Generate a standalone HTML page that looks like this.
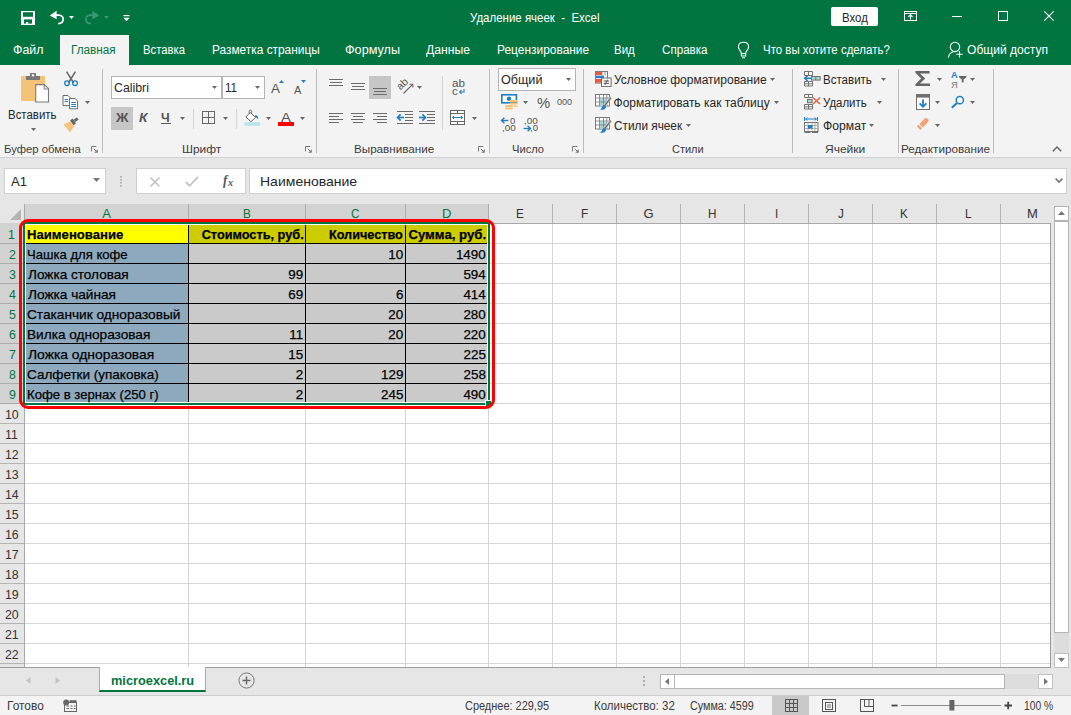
<!DOCTYPE html>
<html lang="ru"><head><meta charset="utf-8"><title>Удаление ячеек - Excel</title>
<style>
html,body{margin:0;padding:0;}
body{width:1071px;height:715px;position:relative;overflow:hidden;background:#fff;font-family:"Liberation Sans",sans-serif;}
.a{position:absolute;box-sizing:border-box;}
.t{position:absolute;white-space:pre;line-height:16px;}
svg{position:absolute;overflow:visible;}
</style></head><body>
<div class="a" style="left:0px;top:0px;width:1071px;height:65px;background:#027440;"></div>
<div class="a" style="left:831px;top:7px;width:47px;height:19px;background:#fff;border-radius:2px;"></div>
<div class="a" style="left:60px;top:35px;width:69px;height:31px;background:#f3f3f3;"></div>
<div class="a" style="left:0px;top:65px;width:1071px;height:92px;background:#f3f3f3;"></div>
<div class="a" style="left:0px;top:157px;width:1071px;height:1px;background:#d0d0d0;"></div>
<div class="a" style="left:0px;top:158px;width:1071px;height:46px;background:#e6e6e6;"></div>
<div class="a" style="left:4px;top:168px;width:102px;height:26px;background:#fff;border:1px solid #cfcfcf;"></div>
<div class="a" style="left:136px;top:168px;width:110px;height:26px;background:#fff;border:1px solid #cfcfcf;"></div>
<div class="a" style="left:249px;top:168px;width:818px;height:26px;background:#fff;border:1px solid #cfcfcf;"></div>
<div class="a" style="left:102px;top:69px;width:1px;height:84px;background:#bcbcbc;"></div>
<div class="a" style="left:316px;top:69px;width:1px;height:84px;background:#bcbcbc;"></div>
<div class="a" style="left:489px;top:69px;width:1px;height:84px;background:#bcbcbc;"></div>
<div class="a" style="left:583px;top:69px;width:1px;height:84px;background:#bcbcbc;"></div>
<div class="a" style="left:792px;top:69px;width:1px;height:84px;background:#bcbcbc;"></div>
<div class="a" style="left:898px;top:69px;width:1px;height:84px;background:#bcbcbc;"></div>
<div class="a" style="left:993px;top:69px;width:1px;height:84px;background:#bcbcbc;"></div>
<div class="a" style="left:111px;top:76px;width:111px;height:23px;background:#fff;border:1px solid #b4b4b4;"></div>
<div class="a" style="left:222px;top:76px;width:43px;height:23px;background:#fff;border:1px solid #b4b4b4;"></div>
<div class="a" style="left:498px;top:68px;width:78px;height:23px;background:#fff;border:1px solid #b4b4b4;"></div>
<div class="a" style="left:111px;top:107px;width:22px;height:23px;background:#c6c6c6;"></div>
<div class="a" style="left:369px;top:76px;width:22px;height:23px;background:#c6c6c6;"></div>
<div class="a" style="left:193px;top:109px;width:1px;height:20px;background:#d4d4d4;"></div>
<div class="a" style="left:236px;top:109px;width:1px;height:20px;background:#d4d4d4;"></div>
<div class="a" style="left:442px;top:76px;width:1px;height:54px;background:#d4d4d4;"></div>
<div class="a" style="left:0px;top:204px;width:1051px;height:463px;background:#fff;"></div>
<div class="a" style="left:0px;top:204px;width:1051px;height:19px;background:#e6e6e6;"></div>
<div class="a" style="left:25px;top:204px;width:464px;height:19px;background:#d2d2d2;"></div>
<div class="a" style="left:0px;top:223px;width:24px;height:444px;background:#e6e6e6;"></div>
<div class="a" style="left:0px;top:223px;width:24px;height:181px;background:#d2d2d2;"></div>
<div class="a" style="left:24px;top:223px;width:1027px;height:1px;background:#a8a8a8;"></div>
<div class="a" style="left:24px;top:204px;width:1px;height:463px;background:#a8a8a8;"></div>
<div class="a" style="left:25px;top:243px;width:1026px;height:1px;background:#d4d4d4;"></div>
<div class="a" style="left:0px;top:243px;width:24px;height:1px;background:#ababab;"></div>
<div class="a" style="left:25px;top:263px;width:1026px;height:1px;background:#d4d4d4;"></div>
<div class="a" style="left:0px;top:263px;width:24px;height:1px;background:#ababab;"></div>
<div class="a" style="left:25px;top:283px;width:1026px;height:1px;background:#d4d4d4;"></div>
<div class="a" style="left:0px;top:283px;width:24px;height:1px;background:#ababab;"></div>
<div class="a" style="left:25px;top:303px;width:1026px;height:1px;background:#d4d4d4;"></div>
<div class="a" style="left:0px;top:303px;width:24px;height:1px;background:#ababab;"></div>
<div class="a" style="left:25px;top:323px;width:1026px;height:1px;background:#d4d4d4;"></div>
<div class="a" style="left:0px;top:323px;width:24px;height:1px;background:#ababab;"></div>
<div class="a" style="left:25px;top:343px;width:1026px;height:1px;background:#d4d4d4;"></div>
<div class="a" style="left:0px;top:343px;width:24px;height:1px;background:#ababab;"></div>
<div class="a" style="left:25px;top:363px;width:1026px;height:1px;background:#d4d4d4;"></div>
<div class="a" style="left:0px;top:363px;width:24px;height:1px;background:#ababab;"></div>
<div class="a" style="left:25px;top:383px;width:1026px;height:1px;background:#d4d4d4;"></div>
<div class="a" style="left:0px;top:383px;width:24px;height:1px;background:#ababab;"></div>
<div class="a" style="left:25px;top:403px;width:1026px;height:1px;background:#d4d4d4;"></div>
<div class="a" style="left:0px;top:403px;width:24px;height:1px;background:#ababab;"></div>
<div class="a" style="left:25px;top:423px;width:1026px;height:1px;background:#d4d4d4;"></div>
<div class="a" style="left:0px;top:423px;width:24px;height:1px;background:#b4b4b4;"></div>
<div class="a" style="left:25px;top:443px;width:1026px;height:1px;background:#d4d4d4;"></div>
<div class="a" style="left:0px;top:443px;width:24px;height:1px;background:#b4b4b4;"></div>
<div class="a" style="left:25px;top:463px;width:1026px;height:1px;background:#d4d4d4;"></div>
<div class="a" style="left:0px;top:463px;width:24px;height:1px;background:#b4b4b4;"></div>
<div class="a" style="left:25px;top:483px;width:1026px;height:1px;background:#d4d4d4;"></div>
<div class="a" style="left:0px;top:483px;width:24px;height:1px;background:#b4b4b4;"></div>
<div class="a" style="left:25px;top:503px;width:1026px;height:1px;background:#d4d4d4;"></div>
<div class="a" style="left:0px;top:503px;width:24px;height:1px;background:#b4b4b4;"></div>
<div class="a" style="left:25px;top:523px;width:1026px;height:1px;background:#d4d4d4;"></div>
<div class="a" style="left:0px;top:523px;width:24px;height:1px;background:#b4b4b4;"></div>
<div class="a" style="left:25px;top:543px;width:1026px;height:1px;background:#d4d4d4;"></div>
<div class="a" style="left:0px;top:543px;width:24px;height:1px;background:#b4b4b4;"></div>
<div class="a" style="left:25px;top:563px;width:1026px;height:1px;background:#d4d4d4;"></div>
<div class="a" style="left:0px;top:563px;width:24px;height:1px;background:#b4b4b4;"></div>
<div class="a" style="left:25px;top:583px;width:1026px;height:1px;background:#d4d4d4;"></div>
<div class="a" style="left:0px;top:583px;width:24px;height:1px;background:#b4b4b4;"></div>
<div class="a" style="left:25px;top:603px;width:1026px;height:1px;background:#d4d4d4;"></div>
<div class="a" style="left:0px;top:603px;width:24px;height:1px;background:#b4b4b4;"></div>
<div class="a" style="left:25px;top:623px;width:1026px;height:1px;background:#d4d4d4;"></div>
<div class="a" style="left:0px;top:623px;width:24px;height:1px;background:#b4b4b4;"></div>
<div class="a" style="left:25px;top:643px;width:1026px;height:1px;background:#d4d4d4;"></div>
<div class="a" style="left:0px;top:643px;width:24px;height:1px;background:#b4b4b4;"></div>
<div class="a" style="left:25px;top:663px;width:1026px;height:1px;background:#d4d4d4;"></div>
<div class="a" style="left:0px;top:663px;width:24px;height:1px;background:#b4b4b4;"></div>
<div class="a" style="left:188px;top:224px;width:1px;height:443px;background:#d4d4d4;"></div>
<div class="a" style="left:188px;top:204px;width:1px;height:19px;background:#ababab;"></div>
<div class="a" style="left:305px;top:224px;width:1px;height:443px;background:#d4d4d4;"></div>
<div class="a" style="left:305px;top:204px;width:1px;height:19px;background:#ababab;"></div>
<div class="a" style="left:405px;top:224px;width:1px;height:443px;background:#d4d4d4;"></div>
<div class="a" style="left:405px;top:204px;width:1px;height:19px;background:#ababab;"></div>
<div class="a" style="left:488px;top:224px;width:1px;height:443px;background:#d4d4d4;"></div>
<div class="a" style="left:488px;top:204px;width:1px;height:19px;background:#ababab;"></div>
<div class="a" style="left:552px;top:224px;width:1px;height:443px;background:#d4d4d4;"></div>
<div class="a" style="left:552px;top:204px;width:1px;height:19px;background:#b4b4b4;"></div>
<div class="a" style="left:616px;top:224px;width:1px;height:443px;background:#d4d4d4;"></div>
<div class="a" style="left:616px;top:204px;width:1px;height:19px;background:#b4b4b4;"></div>
<div class="a" style="left:680px;top:224px;width:1px;height:443px;background:#d4d4d4;"></div>
<div class="a" style="left:680px;top:204px;width:1px;height:19px;background:#b4b4b4;"></div>
<div class="a" style="left:744px;top:224px;width:1px;height:443px;background:#d4d4d4;"></div>
<div class="a" style="left:744px;top:204px;width:1px;height:19px;background:#b4b4b4;"></div>
<div class="a" style="left:808px;top:224px;width:1px;height:443px;background:#d4d4d4;"></div>
<div class="a" style="left:808px;top:204px;width:1px;height:19px;background:#b4b4b4;"></div>
<div class="a" style="left:872px;top:224px;width:1px;height:443px;background:#d4d4d4;"></div>
<div class="a" style="left:872px;top:204px;width:1px;height:19px;background:#b4b4b4;"></div>
<div class="a" style="left:936px;top:224px;width:1px;height:443px;background:#d4d4d4;"></div>
<div class="a" style="left:936px;top:204px;width:1px;height:19px;background:#b4b4b4;"></div>
<div class="a" style="left:1000px;top:224px;width:1px;height:443px;background:#d4d4d4;"></div>
<div class="a" style="left:1000px;top:204px;width:1px;height:19px;background:#b4b4b4;"></div>
<svg style="left:9px;top:208px" width="13" height="13"><path d="M12 1V12H1Z" fill="#b4b4b4"/></svg>
<div class="a" style="left:25px;top:224px;width:463px;height:179px;background:#fff;"></div>
<div class="a" style="left:26px;top:225px;width:162px;height:18px;background:#ffff00;"></div>
<div class="a" style="left:189px;top:225px;width:298px;height:18px;background:#cccc00;"></div>
<div class="a" style="left:26px;top:244px;width:162px;height:158px;background:#8ea9be;"></div>
<div class="a" style="left:189px;top:244px;width:298px;height:158px;background:#cacaca;"></div>
<div class="a" style="left:26px;top:243px;width:461px;height:1px;background:#000;"></div>
<div class="a" style="left:26px;top:263px;width:461px;height:1px;background:#000;"></div>
<div class="a" style="left:26px;top:283px;width:461px;height:1px;background:#000;"></div>
<div class="a" style="left:26px;top:303px;width:461px;height:1px;background:#000;"></div>
<div class="a" style="left:26px;top:323px;width:461px;height:1px;background:#000;"></div>
<div class="a" style="left:26px;top:343px;width:461px;height:1px;background:#000;"></div>
<div class="a" style="left:26px;top:363px;width:461px;height:1px;background:#000;"></div>
<div class="a" style="left:26px;top:383px;width:461px;height:1px;background:#000;"></div>
<div class="a" style="left:188px;top:225px;width:1px;height:177px;background:#000;"></div>
<div class="a" style="left:305px;top:225px;width:1px;height:177px;background:#000;"></div>
<div class="a" style="left:405px;top:225px;width:1px;height:177px;background:#000;"></div>
<div class="a" style="left:23px;top:222px;width:467px;height:183px;border:2px solid #027440;"></div>
<div class="a" style="left:485px;top:400px;width:7px;height:7px;background:#027440;border:1px solid #fff;"></div>
<div class="a" style="left:19px;top:219px;width:476px;height:190px;border:3px solid #ff0000;border-radius:9px;"></div>
<div class="a" style="left:1050px;top:223px;width:1px;height:445px;background:#9c9c9c;"></div>
<div class="a" style="left:0px;top:667px;width:1051px;height:1px;background:#9c9c9c;"></div>
<div class="a" style="left:1051px;top:204px;width:20px;height:464px;background:#e6e6e6;"></div>
<div class="a" style="left:1054px;top:206px;width:15px;height:15px;background:#fff;border:1px solid #b4b4b4;"></div>
<div class="a" style="left:1054px;top:221px;width:15px;height:412px;background:#fff;border:1px solid #b4b4b4;"></div>
<div class="a" style="left:1054px;top:633px;width:15px;height:20px;background:#dddddd;"></div>
<div class="a" style="left:1054px;top:653px;width:15px;height:15px;background:#fff;border:1px solid #c0c0c0;"></div>
<svg style="left:1058px;top:211px" width="7" height="4"><path d="M0 4L3.5 0L7 4Z" fill="#777"/></svg>
<svg style="left:1058px;top:658px" width="7" height="4"><path d="M0 0L3.5 4L7 0Z" fill="#777"/></svg>
<div class="a" style="left:0px;top:668px;width:1071px;height:27px;background:#e6e6e6;"></div>
<div class="a" style="left:99px;top:667px;width:107px;height:25px;background:#fff;border-left:1px solid #ababab;border-right:1px solid #ababab;border-bottom:2px solid #027440;"></div>
<div class="a" style="left:0px;top:695px;width:1071px;height:1px;background:#cdcdcd;"></div>
<div class="a" style="left:660px;top:674px;width:15px;height:15px;background:#fff;border:1px solid #b4b4b4;"></div>
<div class="a" style="left:674px;top:674px;width:331px;height:15px;background:#fff;border:1px solid #b4b4b4;"></div>
<div class="a" style="left:1005px;top:674px;width:33px;height:15px;background:#dddddd;"></div>
<div class="a" style="left:1038px;top:674px;width:15px;height:15px;background:#fff;border:1px solid #c0c0c0;"></div>
<svg style="left:665px;top:678px" width="4" height="7"><path d="M4 0L0 3.5L4 7Z" fill="#777"/></svg>
<svg style="left:1044px;top:678px" width="4" height="7"><path d="M0 0L4 3.5L0 7Z" fill="#777"/></svg>
<div class="a" style="left:0px;top:696px;width:1071px;height:19px;background:#f3f3f3;"></div>
<div class="a" style="left:772px;top:696px;width:37px;height:19px;background:#c8c8c8;"></div>
<span class="t" style="top:9.67px;font-size:12.2px;color:#fff;left:469.92px;transform-origin:0 50%;transform:scaleX(0.9418);">Удаление ячеек  -  Excel</span>
<span class="t" style="top:9.74px;font-size:12px;color:#262626;left:841.69px;transform-origin:0 50%;transform:scaleX(0.9540);">Вход</span>
<span class="t" style="top:41.84px;font-size:12.3px;color:#fff;left:13.29px;transform-origin:0 50%;transform:scaleX(1.0100);">Файл</span>
<span class="t" style="top:41.84px;font-size:12.3px;color:#027440;left:71.44px;transform-origin:0 50%;transform:scaleX(0.9554);">Главная</span>
<span class="t" style="top:41.84px;font-size:12.3px;color:#fff;left:142.78px;transform-origin:0 50%;transform:scaleX(0.9167);">Вставка</span>
<span class="t" style="top:41.84px;font-size:12.3px;color:#fff;left:211.63px;transform-origin:0 50%;transform:scaleX(0.9659);">Разметка страницы</span>
<span class="t" style="top:41.84px;font-size:12.3px;color:#fff;left:345.48px;transform-origin:0 50%;transform:scaleX(1.0272);">Формулы</span>
<span class="t" style="top:41.84px;font-size:12.3px;color:#fff;left:426.45px;transform-origin:0 50%;transform:scaleX(0.9921);">Данные</span>
<span class="t" style="top:41.84px;font-size:12.3px;color:#fff;left:496.53px;transform-origin:0 50%;transform:scaleX(0.9707);">Рецензирование</span>
<span class="t" style="top:41.84px;font-size:12.3px;color:#fff;left:614.47px;transform-origin:0 50%;transform:scaleX(0.9348);">Вид</span>
<span class="t" style="top:41.84px;font-size:12.3px;color:#fff;left:662.13px;transform-origin:0 50%;transform:scaleX(0.9442);">Справка</span>
<span class="t" style="top:41.84px;font-size:12.3px;color:#fff;left:762.61px;transform-origin:0 50%;transform:scaleX(0.9325);">Что вы хотите сделать?</span>
<span class="t" style="top:41.84px;font-size:12.3px;color:#fff;left:967.46px;transform-origin:0 50%;transform:scaleX(0.9806);">Общий доступ</span>
<span class="t" style="top:141.35px;font-size:11.4px;color:#3b3b3b;left:3.61px;transform-origin:0 50%;transform:scaleX(0.9925);">Буфер обмена</span>
<span class="t" style="top:141.35px;font-size:11.4px;color:#3b3b3b;left:181.86px;transform-origin:0 50%;transform:scaleX(1.0484);">Шрифт</span>
<span class="t" style="top:141.35px;font-size:11.4px;color:#3b3b3b;left:354.48px;transform-origin:0 50%;transform:scaleX(1.0223);">Выравнивание</span>
<span class="t" style="top:141.35px;font-size:11.4px;color:#3b3b3b;left:511.87px;transform-origin:0 50%;transform:scaleX(0.9779);">Число</span>
<span class="t" style="top:141.35px;font-size:11.4px;color:#3b3b3b;left:672.27px;transform-origin:0 50%;transform:scaleX(0.9643);">Стили</span>
<span class="t" style="top:141.35px;font-size:11.4px;color:#3b3b3b;left:824.87px;transform-origin:0 50%;transform:scaleX(1.0550);">Ячейки</span>
<span class="t" style="top:141.35px;font-size:11.4px;color:#3b3b3b;left:901.38px;transform-origin:0 50%;transform:scaleX(1.0263);">Редактирование</span>
<span class="t" style="top:106.74px;font-size:12px;color:#262626;left:8.49px;transform-origin:0 50%;transform:scaleX(0.9542);">Вставить</span>
<span class="t" style="top:80.44px;font-size:12px;color:#262626;left:113.88px;transform-origin:0 50%;transform:scaleX(1.0263);">Calibri</span>
<span class="t" style="top:80.44px;font-size:12px;color:#262626;left:225.13px;transform-origin:0 50%;transform:scaleX(0.9651);">11</span>
<span class="t" style="top:72.44px;font-size:12px;color:#262626;left:613.90px;transform-origin:0 50%;">Условное форматирование</span>
<span class="t" style="top:95.34px;font-size:12px;color:#262626;left:613.55px;transform-origin:0 50%;">Форматировать как таблицу</span>
<span class="t" style="top:118.34px;font-size:12px;color:#262626;left:613.61px;transform-origin:0 50%;transform:scaleX(0.9832);">Стили ячеек</span>
<span class="t" style="top:72.44px;font-size:12px;color:#262626;left:822.59px;transform-origin:0 50%;transform:scaleX(0.9603);">Вставить</span>
<span class="t" style="top:95.34px;font-size:12px;color:#262626;left:823.21px;transform-origin:0 50%;transform:scaleX(0.9542);">Удалить</span>
<span class="t" style="top:118.34px;font-size:12px;color:#262626;left:822.84px;transform-origin:0 50%;transform:scaleX(1.0148);">Формат</span>
<span class="t" style="top:72.44px;font-size:12px;color:#262626;left:500.92px;transform-origin:0 50%;transform:scaleX(1.0490);">Общий</span>
<span class="t" style="top:174.40px;font-size:13px;color:#262626;left:11.00px;transform-origin:0 50%;transform:scaleX(1.0082);">A1</span>
<span class="t" style="top:174.40px;font-size:13px;color:#262626;left:259.90px;transform-origin:0 50%;transform:scaleX(1.0782);">Наименование</span>
<span class="t" style="top:697.74px;font-size:12px;color:#3b3b3b;left:6.76px;transform-origin:0 50%;transform:scaleX(0.9935);">Готово</span>
<span class="t" style="top:697.74px;font-size:12px;color:#3b3b3b;left:464.55px;transform-origin:0 50%;transform:scaleX(0.9129);">Среднее: 229,95</span>
<span class="t" style="top:697.74px;font-size:12px;color:#3b3b3b;left:593.89px;transform-origin:0 50%;transform:scaleX(0.9562);">Количество: 32</span>
<span class="t" style="top:697.74px;font-size:12px;color:#3b3b3b;left:690.36px;transform-origin:0 50%;transform:scaleX(0.8979);">Сумма: 4599</span>
<span class="t" style="top:697.74px;font-size:12px;color:#3b3b3b;left:1023.63px;transform-origin:0 50%;transform:scaleX(0.8561);">100 %</span>
<span class="t" style="top:672.70px;font-size:13px;color:#027440;font-weight:bold;left:110.80px;transform-origin:0 50%;transform:scaleX(0.9831);">microexcel.ru</span>
<span class="t" style="top:205.80px;font-size:13px;color:#027440;left:102.13px;transform-origin:0 50%;">A</span>
<span class="t" style="top:205.80px;font-size:13px;color:#027440;left:242.89px;transform-origin:0 50%;transform:scaleX(0.9000);">B</span>
<span class="t" style="top:205.80px;font-size:13px;color:#027440;left:351.20px;transform-origin:0 50%;transform:scaleX(0.9000);">C</span>
<span class="t" style="top:205.80px;font-size:13px;color:#027440;left:442.02px;transform-origin:0 50%;">D</span>
<span class="t" style="top:205.80px;font-size:13px;color:#333;left:516.39px;transform-origin:0 50%;transform:scaleX(0.9000);">E</span>
<span class="t" style="top:205.80px;font-size:13px;color:#333;left:580.66px;transform-origin:0 50%;transform:scaleX(0.9000);">F</span>
<span class="t" style="top:205.80px;font-size:13px;color:#333;left:643.62px;transform-origin:0 50%;">G</span>
<span class="t" style="top:205.80px;font-size:13px;color:#333;left:708.30px;transform-origin:0 50%;transform:scaleX(0.9000);">H</span>
<span class="t" style="top:205.80px;font-size:13px;color:#333;left:774.95px;transform-origin:0 50%;transform:scaleX(0.9000);">I</span>
<span class="t" style="top:205.80px;font-size:13px;color:#333;left:837.85px;transform-origin:0 50%;transform:scaleX(0.9000);">J</span>
<span class="t" style="top:205.80px;font-size:13px;color:#333;left:900.20px;transform-origin:0 50%;transform:scaleX(0.9000);">K</span>
<span class="t" style="top:205.80px;font-size:13px;color:#333;left:964.94px;transform-origin:0 50%;transform:scaleX(0.9000);">L</span>
<span class="t" style="top:205.80px;font-size:13px;color:#333;left:1027.02px;transform-origin:0 50%;">M</span>
<span class="t" style="top:227.10px;font-size:13px;color:#027440;left:8.43px;transform-origin:0 50%;transform:scaleX(0.9500);">1</span>
<span class="t" style="top:247.10px;font-size:13px;color:#027440;left:8.53px;transform-origin:0 50%;transform:scaleX(0.9500);">2</span>
<span class="t" style="top:267.10px;font-size:13px;color:#027440;left:8.62px;transform-origin:0 50%;transform:scaleX(0.9500);">3</span>
<span class="t" style="top:287.10px;font-size:13px;color:#027440;left:8.62px;transform-origin:0 50%;transform:scaleX(0.9500);">4</span>
<span class="t" style="top:307.10px;font-size:13px;color:#027440;left:8.62px;transform-origin:0 50%;transform:scaleX(0.9500);">5</span>
<span class="t" style="top:327.10px;font-size:13px;color:#027440;left:8.53px;transform-origin:0 50%;transform:scaleX(0.9500);">6</span>
<span class="t" style="top:347.10px;font-size:13px;color:#027440;left:8.53px;transform-origin:0 50%;transform:scaleX(0.9500);">7</span>
<span class="t" style="top:367.10px;font-size:13px;color:#027440;left:8.62px;transform-origin:0 50%;transform:scaleX(0.9500);">8</span>
<span class="t" style="top:387.10px;font-size:13px;color:#027440;left:8.53px;transform-origin:0 50%;transform:scaleX(0.9500);">9</span>
<span class="t" style="top:407.10px;font-size:13px;color:#333;left:4.90px;transform-origin:0 50%;transform:scaleX(0.9500);">10</span>
<span class="t" style="top:427.10px;font-size:13px;color:#333;left:5.45px;transform-origin:0 50%;transform:scaleX(0.9500);">11</span>
<span class="t" style="top:447.10px;font-size:13px;color:#333;left:5.00px;transform-origin:0 50%;transform:scaleX(0.9500);">12</span>
<span class="t" style="top:467.10px;font-size:13px;color:#333;left:5.00px;transform-origin:0 50%;transform:scaleX(0.9500);">13</span>
<span class="t" style="top:487.10px;font-size:13px;color:#333;left:4.90px;transform-origin:0 50%;transform:scaleX(0.9500);">14</span>
<span class="t" style="top:507.10px;font-size:13px;color:#333;left:5.00px;transform-origin:0 50%;transform:scaleX(0.9500);">15</span>
<span class="t" style="top:527.10px;font-size:13px;color:#333;left:5.00px;transform-origin:0 50%;transform:scaleX(0.9500);">16</span>
<span class="t" style="top:547.10px;font-size:13px;color:#333;left:5.00px;transform-origin:0 50%;transform:scaleX(0.9500);">17</span>
<span class="t" style="top:567.10px;font-size:13px;color:#333;left:5.00px;transform-origin:0 50%;transform:scaleX(0.9500);">18</span>
<span class="t" style="top:587.10px;font-size:13px;color:#333;left:5.00px;transform-origin:0 50%;transform:scaleX(0.9500);">19</span>
<span class="t" style="top:607.10px;font-size:13px;color:#333;left:5.00px;transform-origin:0 50%;transform:scaleX(0.9500);">20</span>
<span class="t" style="top:627.10px;font-size:13px;color:#333;left:5.09px;transform-origin:0 50%;transform:scaleX(0.9500);">21</span>
<span class="t" style="top:647.10px;font-size:13px;color:#333;left:5.09px;transform-origin:0 50%;transform:scaleX(0.9500);">22</span>
<span class="t" style="top:227.03px;font-size:13.2px;color:#000;font-weight:bold;left:27.28px;transform-origin:0 50%;transform:scaleX(0.9960);-webkit-text-stroke:0.25px #000;">Наименование</span>
<span class="t" style="top:227.03px;font-size:13.2px;color:#000;font-weight:bold;left:197.57px;transform-origin:100% 50%;transform:scaleX(0.9656);-webkit-text-stroke:0.25px #000;">Стоимость, руб.</span>
<span class="t" style="top:227.03px;font-size:13.2px;color:#000;font-weight:bold;left:326.28px;transform-origin:100% 50%;transform:scaleX(0.9620);-webkit-text-stroke:0.25px #000;">Количество</span>
<span class="t" style="top:227.03px;font-size:13.2px;color:#000;font-weight:bold;left:408.40px;transform-origin:100% 50%;-webkit-text-stroke:0.25px #000;">Сумма, руб.</span>
<span class="t" style="top:247.03px;font-size:13.2px;color:#000;left:27.08px;transform-origin:0 50%;transform:scaleX(0.9918);-webkit-text-stroke:0.25px #000;">Чашка для кофе</span>
<span class="t" style="top:246.96px;font-size:13.4px;color:#000;left:388.23px;transform-origin:100% 50%;-webkit-text-stroke:0.25px #000;">10</span>
<span class="t" style="top:246.96px;font-size:13.4px;color:#000;left:455.92px;transform-origin:100% 50%;-webkit-text-stroke:0.25px #000;">1490</span>
<span class="t" style="top:267.03px;font-size:13.2px;color:#000;left:27.60px;transform-origin:0 50%;transform:scaleX(1.0299);-webkit-text-stroke:0.25px #000;">Ложка столовая</span>
<span class="t" style="top:266.96px;font-size:13.4px;color:#000;left:288.24px;transform-origin:100% 50%;-webkit-text-stroke:0.25px #000;">99</span>
<span class="t" style="top:266.96px;font-size:13.4px;color:#000;left:463.38px;transform-origin:100% 50%;-webkit-text-stroke:0.25px #000;">594</span>
<span class="t" style="top:287.03px;font-size:13.2px;color:#000;left:27.60px;transform-origin:0 50%;transform:scaleX(1.0347);-webkit-text-stroke:0.25px #000;">Ложка чайная</span>
<span class="t" style="top:286.96px;font-size:13.4px;color:#000;left:288.24px;transform-origin:100% 50%;-webkit-text-stroke:0.25px #000;">69</span>
<span class="t" style="top:286.96px;font-size:13.4px;color:#000;left:395.89px;transform-origin:100% 50%;-webkit-text-stroke:0.25px #000;">6</span>
<span class="t" style="top:286.96px;font-size:13.4px;color:#000;left:463.38px;transform-origin:100% 50%;-webkit-text-stroke:0.25px #000;">414</span>
<span class="t" style="top:307.03px;font-size:13.2px;color:#000;left:26.96px;transform-origin:0 50%;transform:scaleX(1.0361);-webkit-text-stroke:0.25px #000;">Стаканчик одноразовый</span>
<span class="t" style="top:306.96px;font-size:13.4px;color:#000;left:388.23px;transform-origin:100% 50%;-webkit-text-stroke:0.25px #000;">20</span>
<span class="t" style="top:306.96px;font-size:13.4px;color:#000;left:463.38px;transform-origin:100% 50%;-webkit-text-stroke:0.25px #000;">280</span>
<span class="t" style="top:327.03px;font-size:13.2px;color:#000;left:27.03px;transform-origin:0 50%;transform:scaleX(1.0333);-webkit-text-stroke:0.25px #000;">Вилка одноразовая</span>
<span class="t" style="top:326.96px;font-size:13.4px;color:#000;left:289.23px;transform-origin:100% 50%;-webkit-text-stroke:0.25px #000;">11</span>
<span class="t" style="top:326.96px;font-size:13.4px;color:#000;left:388.23px;transform-origin:100% 50%;-webkit-text-stroke:0.25px #000;">20</span>
<span class="t" style="top:326.96px;font-size:13.4px;color:#000;left:463.38px;transform-origin:100% 50%;-webkit-text-stroke:0.25px #000;">220</span>
<span class="t" style="top:347.03px;font-size:13.2px;color:#000;left:27.60px;transform-origin:0 50%;transform:scaleX(1.0509);-webkit-text-stroke:0.25px #000;">Ложка одноразовая</span>
<span class="t" style="top:346.96px;font-size:13.4px;color:#000;left:288.24px;transform-origin:100% 50%;-webkit-text-stroke:0.25px #000;">15</span>
<span class="t" style="top:346.96px;font-size:13.4px;color:#000;left:463.59px;transform-origin:100% 50%;-webkit-text-stroke:0.25px #000;">225</span>
<span class="t" style="top:367.03px;font-size:13.2px;color:#000;left:26.97px;transform-origin:0 50%;transform:scaleX(1.0234);-webkit-text-stroke:0.25px #000;">Салфетки (упаковка)</span>
<span class="t" style="top:366.96px;font-size:13.4px;color:#000;left:295.69px;transform-origin:100% 50%;-webkit-text-stroke:0.25px #000;">2</span>
<span class="t" style="top:366.96px;font-size:13.4px;color:#000;left:380.99px;transform-origin:100% 50%;-webkit-text-stroke:0.25px #000;">129</span>
<span class="t" style="top:366.96px;font-size:13.4px;color:#000;left:463.59px;transform-origin:100% 50%;-webkit-text-stroke:0.25px #000;">258</span>
<span class="t" style="top:387.03px;font-size:13.2px;color:#000;left:27.07px;transform-origin:0 50%;transform:scaleX(0.9958);-webkit-text-stroke:0.25px #000;">Кофе в зернах (250 г)</span>
<span class="t" style="top:386.96px;font-size:13.4px;color:#000;left:295.69px;transform-origin:100% 50%;-webkit-text-stroke:0.25px #000;">2</span>
<span class="t" style="top:386.96px;font-size:13.4px;color:#000;left:380.99px;transform-origin:100% 50%;-webkit-text-stroke:0.25px #000;">245</span>
<span class="t" style="top:386.96px;font-size:13.4px;color:#000;left:463.38px;transform-origin:100% 50%;-webkit-text-stroke:0.25px #000;">490</span>
<svg style="left:21px;top:11px" width="14" height="14" viewBox="0 0 14 14"><rect x="0" y="0" width="14" height="14" fill="#fff"/><rect x="2" y="1.2" width="10" height="4.6" fill="#027440"/><rect x="3" y="8.4" width="8" height="4.2" fill="#027440"/><rect x="5" y="11" width="2.2" height="1.8" fill="#fff"/></svg>
<svg style="left:49px;top:10px" width="16" height="15" viewBox="0 0 16 15"><path d="M7.6 0.8L0.8 5.4L7.6 9.2Z" fill="#fff"/><path d="M5 5.2H9.6C12.6 5.2 14.2 7.2 14.2 9.2C14.2 11.6 12.2 13.4 9.2 13.6" fill="none" stroke="#fff" stroke-width="1.8"/></svg>
<svg style="left:69px;top:16px" width="5" height="3" viewBox="0 0 5 3"><path d="M0 0H5L2.5 3Z" fill="#fff"/></svg>
<svg style="left:84px;top:10px" width="16" height="15" viewBox="0 0 16 15"><path d="M8.4 0.8L15.2 5.4L8.4 9.2Z" fill="#3a9871"/><path d="M11 5.2H6.4C3.4 5.2 1.8 7.2 1.8 9.2C1.8 11.6 3.8 13.4 6.8 13.6" fill="none" stroke="#3a9871" stroke-width="1.8"/></svg>
<svg style="left:104px;top:16px" width="5" height="3" viewBox="0 0 5 3"><path d="M0 0H5L2.5 3Z" fill="#3d9873"/></svg>
<svg style="left:123px;top:15px" width="7" height="7" viewBox="0 0 7 7"><rect x="0.5" y="0" width="6" height="1.2" fill="#fff"/><path d="M0.3 2.8H6.7L3.5 6.2Z" fill="#fff"/></svg>
<svg style="left:904px;top:11px" width="13" height="10" viewBox="0 0 13 10"><rect x="0.5" y="0.5" width="12" height="9" fill="none" stroke="#fff"/><path d="M0 2.5H13" stroke="#fff"/><path d="M6.5 8.6V4M4.4 5.8L6.5 3.8L8.6 5.8" fill="none" stroke="#fff" stroke-width="1.1"/></svg>
<svg style="left:952px;top:16px" width="10" height="1" viewBox="0 0 10 1"><rect width="10" height="1" fill="#fff"/></svg>
<svg style="left:998px;top:11px" width="10" height="10" viewBox="0 0 10 10"><rect x="0.5" y="0.5" width="9" height="9" fill="none" stroke="#fff"/></svg>
<svg style="left:1044px;top:11px" width="10" height="10" viewBox="0 0 10 10"><path d="M0.3 0.3L9.7 9.7M9.7 0.3L0.3 9.7" stroke="#fff" stroke-width="1.1"/></svg>
<svg style="left:737px;top:41px" width="13" height="18" viewBox="0 0 13 18"><path d="M4.3 12.2C4.3 10.2 1.4 8.8 1.4 5.8C1.4 3 3.6 1.2 6.5 1.2C9.4 1.2 11.6 3 11.6 5.8C11.6 8.8 8.7 10.2 8.7 12.2" fill="none" stroke="#fff" stroke-width="1.1"/><rect x="4.3" y="12.6" width="4.4" height="2.4" fill="none" stroke="#fff" stroke-width="1"/><path d="M5 16.8H8" stroke="#fff" stroke-width="1"/></svg>
<svg style="left:947px;top:41px" width="17" height="18" viewBox="0 0 17 18"><circle cx="8" cy="5.9" r="4.7" fill="none" stroke="#fff" stroke-width="1.1"/><path d="M1.3 16.6C1.8 13.4 4 11.4 6.4 10.8" fill="none" stroke="#fff" stroke-width="1.1"/><path d="M9.3 13.2H15.7M12.5 10V16.4" stroke="#fff" stroke-width="1.1"/></svg>
<svg style="left:26px;top:677px" width="5" height="7" viewBox="0 0 5 7"><path d="M4.5 0L0 3.5L4.5 7Z" fill="#c2c2c2"/></svg>
<svg style="left:55px;top:677px" width="5" height="7" viewBox="0 0 5 7"><path d="M0.5 0L5 3.5L0.5 7Z" fill="#c2c2c2"/></svg>
<svg style="left:238px;top:672px" width="17" height="17" viewBox="0 0 17 17"><circle cx="8.5" cy="8.5" r="7.6" fill="none" stroke="#777" stroke-width="1"/><path d="M8.5 4.5V12.5M4.5 8.5H12.5" stroke="#666" stroke-width="1.4"/></svg>
<svg style="left:643px;top:676px" width="2" height="10" viewBox="0 0 2 10"><rect x="0" y="0" width="2" height="2" fill="#b0b0b0"/><rect x="0" y="4" width="2" height="2" fill="#b0b0b0"/><rect x="0" y="8" width="2" height="2" fill="#b0b0b0"/></svg>
<svg style="left:63px;top:699px" width="14" height="13" viewBox="0 0 14 13"><circle cx="3.2" cy="3.4" r="3" fill="#666"/><rect x="6.5" y="1.2" width="7" height="2.2" fill="#666"/><rect x="1.5" y="3.5" width="12" height="9" fill="none" stroke="#666" stroke-width="1"/><path d="M3.5 7H6M7.5 7H9.5M10.8 7H12.5M3.5 9.5H6M7.5 9.5H9.5M10.8 9.5H12.5" stroke="#666" stroke-width="1"/></svg>
<svg style="left:785px;top:699px" width="13" height="13" viewBox="0 0 13 13"><rect x="0.5" y="0.5" width="12" height="12" fill="none" stroke="#555"/><path d="M4.5 0V13M8.5 0V13M0 4.5H13M0 8.5H13" stroke="#555"/></svg>
<svg style="left:822px;top:699px" width="14" height="13" viewBox="0 0 14 13"><rect x="0.5" y="0.5" width="13" height="12" fill="none" stroke="#555"/><rect x="3.5" y="3.5" width="7" height="7" fill="none" stroke="#555"/><path d="M5 6H9M5 8H9" stroke="#555" stroke-width="0.8"/></svg>
<svg style="left:860px;top:699px" width="14" height="13" viewBox="0 0 14 13"><rect x="0.5" y="0.5" width="13" height="12" fill="none" stroke="#555"/><path d="M4.5 0.5V7.5H13.5M9 0.5V7.5" fill="none" stroke="#555"/></svg>
<svg style="left:891px;top:700px" width="122" height="11" viewBox="0 0 122 11"><rect x="0.5" y="4.6" width="6" height="1.8" fill="#444"/><rect x="10" y="5" width="100" height="1" fill="#8a8a8a"/><rect x="58.4" y="0" width="5" height="10.5" fill="#666"/><path d="M113.5 5.5H121M117.2 1.8V9.2" stroke="#444" stroke-width="1.8"/></svg>
<svg style="left:20px;top:72px" width="30" height="32" viewBox="0 0 30 32"><rect x="1" y="4" width="24" height="25" rx="0.8" fill="#f5c378"/><rect x="6" y="4" width="14" height="4" fill="#787878"/><rect x="10" y="1" width="6" height="4" rx="0.8" fill="#787878"/><rect x="11.8" y="2.2" width="2.4" height="2.2" fill="#f3f3f3"/><path d="M15.7 12.6H24.4L28.5 16.7V30H15.7Z" fill="#fff" stroke="#7a7a7a" stroke-width="1.1"/><path d="M24.2 12.8V17H28.4" fill="none" stroke="#7a7a7a" stroke-width="1"/></svg>
<svg style="left:31px;top:128px" width="5" height="3" viewBox="0 0 5 3"><path d="M0 0H5L2.5 3Z" fill="#666"/></svg>
<svg style="left:63px;top:71px" width="16" height="16" viewBox="0 0 16 16"><path d="M3.6 0.6L10.6 12M12.4 0.6L5.4 12" stroke="#6b6b6b" stroke-width="1.6" fill="none"/><circle cx="4" cy="12.2" r="2.3" fill="none" stroke="#1e7ec4" stroke-width="1.3"/><circle cx="12" cy="12.2" r="2.3" fill="none" stroke="#1e7ec4" stroke-width="1.3"/></svg>
<svg style="left:62px;top:95px" width="17" height="15" viewBox="0 0 17 15"><path d="M1 0.5H6L8.4 2.9V10.6H1Z" fill="#fff" stroke="#6b6b6b"/><path d="M2.6 4.5H6M2.6 6.5H6" stroke="#1e7ec4"/><path d="M7.5 3.5H13L15.6 6.1V13.8H7.5Z" fill="#fff" stroke="#6b6b6b"/><path d="M9.2 7.5H14M9.2 9.5H14M9.2 11.5H14" stroke="#1e7ec4"/></svg>
<svg style="left:85px;top:101px" width="5" height="3" viewBox="0 0 5 3"><path d="M0 0H5L2.5 3Z" fill="#666"/></svg>
<svg style="left:63px;top:117px" width="16" height="16" viewBox="0 0 16 16"><path d="M0.5 7.2L7.4 4.6L11 9.4L6.8 15.4Z" fill="#f5c378"/><path d="M7 3.4L9.6 1.6L13 6.2L10.6 8.2Z" fill="#666"/><path d="M10.6 2.6L14 0.4L15.6 2.6L12.4 5Z" fill="#666"/></svg>
<svg style="left:212px;top:86px" width="5" height="3" viewBox="0 0 5 3"><path d="M0 0H5L2.5 3Z" fill="#666"/></svg>
<svg style="left:255px;top:86px" width="5" height="3" viewBox="0 0 5 3"><path d="M0 0H5L2.5 3Z" fill="#666"/></svg>
<span class="t" style="top:110.27px;font-size:12.5px;color:#555;font-weight:bold;left:115.86px;transform-origin:0 50%;transform:scaleX(1.1004);">Ж</span>
<span class="t" style="top:110.27px;font-size:12.5px;color:#555;font-weight:bold;font-style:italic;left:138.98px;transform-origin:0 50%;transform:scaleX(1.0976);">К</span>
<span class="t" style="top:110.27px;font-size:12.5px;color:#555;font-weight:bold;left:161.36px;transform-origin:0 50%;transform:scaleX(0.9863);">Ч</span>
<div class="a" style="left:161px;top:123px;width:10px;height:1px;background:#555;"></div>
<svg style="left:180px;top:117px" width="5" height="3" viewBox="0 0 5 3"><path d="M0 0H5L2.5 3Z" fill="#666"/></svg>
<span class="t" style="top:80.92px;font-size:13.5px;color:#555;left:271.30px;transform-origin:0 50%;transform:scaleX(0.9922);">A</span>
<svg style="left:279px;top:80px" width="5" height="3" viewBox="0 0 5 3"><path d="M0 3H5L2.5 0Z" fill="#1e7ec4"/></svg>
<span class="t" style="top:81.79px;font-size:11px;color:#555;left:294.20px;transform-origin:0 50%;transform:scaleX(1.0068);">A</span>
<svg style="left:301px;top:80px" width="5" height="3" viewBox="0 0 5 3"><path d="M0 0H5L2.5 3Z" fill="#1e7ec4"/></svg>
<svg style="left:202px;top:111px" width="13" height="13" viewBox="0 0 13 13"><rect x="0.5" y="0.5" width="12" height="12" fill="none" stroke="#666"/><path d="M6.5 0V13M0 6.5H13" stroke="#666"/></svg>
<svg style="left:223px;top:117px" width="5" height="3" viewBox="0 0 5 3"><path d="M0 0H5L2.5 3Z" fill="#666"/></svg>
<svg style="left:244px;top:109px" width="17" height="17" viewBox="0 0 17 17"><path d="M6.2 3.6L11.6 8.4L7 12.6L1.8 8Z" fill="#fff" stroke="#666" stroke-width="1"/><path d="M5.2 5V2.2C5.2 0.6 7.6 0.6 7.6 2.2V4.6" fill="none" stroke="#666" stroke-width="0.9"/><path d="M11.4 6C13.4 6.4 14.6 8 14.2 10.4C13.4 9.2 12.4 8.6 11 8.6Z" fill="#1e7ec4"/><rect x="0.5" y="13.2" width="15.5" height="3.6" fill="#b9e3ea"/></svg>
<svg style="left:266px;top:117px" width="5" height="3" viewBox="0 0 5 3"><path d="M0 0H5L2.5 3Z" fill="#666"/></svg>
<span class="t" style="top:109.82px;font-size:13.5px;color:#555;left:281.40px;transform-origin:0 50%;transform:scaleX(1.1025);">A</span>
<div class="a" style="left:278px;top:122px;width:16px;height:4px;background:#ff0000;"></div>
<svg style="left:300px;top:117px" width="5" height="3" viewBox="0 0 5 3"><path d="M0 0H5L2.5 3Z" fill="#666"/></svg>
<svg style="left:329px;top:79px" width="16" height="14" viewBox="0 0 16 14"><rect x="0" y="0" width="14" height="1" fill="#6a6a6a"/><rect x="1" y="3" width="12" height="1" fill="#6a6a6a"/><rect x="0" y="6" width="14" height="1" fill="#6a6a6a"/></svg>
<svg style="left:351px;top:83px" width="16" height="14" viewBox="0 0 16 14"><rect x="0" y="0" width="14" height="1" fill="#6a6a6a"/><rect x="1" y="3" width="12" height="1" fill="#6a6a6a"/><rect x="0" y="6" width="14" height="1" fill="#6a6a6a"/></svg>
<svg style="left:373px;top:88px" width="16" height="14" viewBox="0 0 16 14"><rect x="0" y="0" width="14" height="1" fill="#6a6a6a"/><rect x="1" y="3" width="12" height="1" fill="#6a6a6a"/><rect x="0" y="6" width="14" height="1" fill="#6a6a6a"/></svg>
<svg style="left:329px;top:113px" width="16" height="14" viewBox="0 0 16 14"><rect x="0" y="0" width="14" height="1" fill="#6a6a6a"/><rect x="0" y="3" width="10" height="1" fill="#6a6a6a"/><rect x="0" y="6" width="14" height="1" fill="#6a6a6a"/><rect x="0" y="9" width="10" height="1" fill="#6a6a6a"/></svg>
<svg style="left:351px;top:113px" width="16" height="14" viewBox="0 0 16 14"><rect x="0" y="0" width="14" height="1" fill="#6a6a6a"/><rect x="2" y="3" width="10" height="1" fill="#6a6a6a"/><rect x="0" y="6" width="14" height="1" fill="#6a6a6a"/><rect x="2" y="9" width="10" height="1" fill="#6a6a6a"/></svg>
<svg style="left:373px;top:113px" width="16" height="14" viewBox="0 0 16 14"><rect x="0" y="0" width="14" height="1" fill="#6a6a6a"/><rect x="4" y="3" width="10" height="1" fill="#6a6a6a"/><rect x="0" y="6" width="14" height="1" fill="#6a6a6a"/><rect x="4" y="9" width="10" height="1" fill="#6a6a6a"/></svg>
<span class="t" style="left:402px;top:80.5px;font-size:10.5px;line-height:11px;color:#555;transform-origin:0 100%;transform:rotate(-45deg);">ab</span>
<svg style="left:403px;top:83px" width="11" height="11" viewBox="0 0 11 11"><path d="M0.5 10.5L9.6 1.4" stroke="#666" stroke-width="1.1"/><path d="M6.4 1.2H9.8V4.6" fill="none" stroke="#666" stroke-width="1.1"/></svg>
<svg style="left:417px;top:86px" width="5" height="3" viewBox="0 0 5 3"><path d="M0 0H5L2.5 3Z" fill="#666"/></svg>
<span class="t" style="top:75.49px;font-size:11px;color:#555;left:451.52px;transform-origin:0 50%;transform:scaleX(1.0556);">ab</span>
<span class="t" style="top:82.79px;font-size:11px;color:#555;left:451.53px;transform-origin:0 50%;transform:scaleX(1.0417);">c</span>
<svg style="left:459px;top:89px" width="6" height="5" viewBox="0 0 6 5"><path d="M5 0V3H1.2" fill="none" stroke="#1e7ec4" stroke-width="1.1"/><path d="M2.6 1.2L0.6 3L2.6 4.8" fill="none" stroke="#1e7ec4" stroke-width="1.1"/></svg>
<svg style="left:397px;top:111px" width="16" height="13" viewBox="0 0 16 13"><rect x="0" y="0" width="16" height="1" fill="#6a6a6a"/><rect x="0" y="12" width="16" height="1" fill="#6a6a6a"/><rect x="8" y="3" width="8" height="1" fill="#6a6a6a"/><rect x="8" y="6" width="8" height="1" fill="#6a6a6a"/><rect x="8" y="9" width="8" height="1" fill="#6a6a6a"/><path d="M0.6 6.5H7" stroke="#1e7ec4" stroke-width="1.6"/><path d="M3.6 3.4L0.6 6.5L3.6 9.6" fill="none" stroke="#1e7ec4" stroke-width="1.6"/></svg>
<svg style="left:419px;top:111px" width="16" height="13" viewBox="0 0 16 13"><rect x="0" y="0" width="16" height="1" fill="#6a6a6a"/><rect x="0" y="12" width="16" height="1" fill="#6a6a6a"/><rect x="8" y="3" width="8" height="1" fill="#6a6a6a"/><rect x="8" y="6" width="8" height="1" fill="#6a6a6a"/><rect x="8" y="9" width="8" height="1" fill="#6a6a6a"/><path d="M0 6.5H6.4" stroke="#1e7ec4" stroke-width="1.6"/><path d="M3.4 3.4L6.4 6.5L3.4 9.6" fill="none" stroke="#1e7ec4" stroke-width="1.6"/></svg>
<svg style="left:450px;top:110px" width="15" height="15" viewBox="0 0 15 15"><rect x="0.5" y="0.5" width="14" height="14" fill="#fff" stroke="#666"/><path d="M0 3.5H15M0 11.5H15M7.5 0V3.5M7.5 11.5V15" stroke="#666"/><path d="M2.4 7.5H12.6" stroke="#1e7ec4" stroke-width="1"/><path d="M4 6L2.4 7.5L4 9M11 6L12.6 7.5L11 9" fill="none" stroke="#1e7ec4" stroke-width="1"/></svg>
<svg style="left:472px;top:117px" width="5" height="3" viewBox="0 0 5 3"><path d="M0 0H5L2.5 3Z" fill="#666"/></svg>
<svg style="left:566px;top:78px" width="5" height="3" viewBox="0 0 5 3"><path d="M0 0H5L2.5 3Z" fill="#666"/></svg>
<svg style="left:501px;top:94px" width="17" height="16" viewBox="0 0 17 16"><rect x="0.8" y="0.8" width="14.6" height="8" fill="#fff" stroke="#1e7ec4" stroke-width="1.6"/><circle cx="8" cy="4.8" r="2.2" fill="#1e7ec4"/><rect x="8.5" y="6" width="8" height="2" rx="1" fill="#f5c378"/><rect x="8.5" y="8.6" width="8" height="2" rx="1" fill="#f5c378"/><rect x="4" y="11" width="8" height="2" rx="1" fill="#f5c378"/><rect x="4" y="13.6" width="8" height="2" rx="1" fill="#f5c378"/><rect x="12.6" y="11.4" width="4" height="1.6" rx="0.8" fill="#f5c378"/></svg>
<svg style="left:523px;top:101px" width="5" height="3" viewBox="0 0 5 3"><path d="M0 0H5L2.5 3Z" fill="#666"/></svg>
<span class="t" style="top:94.85px;font-size:14px;color:#555;left:537.04px;transform-origin:0 50%;transform:scaleX(1.0609);">%</span>
<span class="t" style="top:94.01px;font-size:9.5px;color:#555;left:557.37px;transform-origin:0 50%;transform:scaleX(0.9560);">000</span>
<svg style="left:501px;top:117px" width="8" height="7" viewBox="0 0 8 7"><path d="M0.6 3.5H7.4" stroke="#1e7ec4" stroke-width="1.4"/><path d="M3.4 0.8L0.6 3.5L3.4 6.2" fill="none" stroke="#1e7ec4" stroke-width="1.4"/></svg>
<span class="t" style="top:112.98px;font-size:9px;color:#555;left:509.93px;transform-origin:0 50%;transform:scaleX(1.0575);">0</span>
<span class="t" style="top:119.98px;font-size:9px;color:#555;left:501.62px;transform-origin:0 50%;transform:scaleX(1.1047);">,00</span>
<span class="t" style="top:112.98px;font-size:9px;color:#555;left:523.62px;transform-origin:0 50%;transform:scaleX(1.1047);">,00</span>
<svg style="left:523px;top:125px" width="8" height="7" viewBox="0 0 8 7"><path d="M0.6 3.5H7.4" stroke="#1e7ec4" stroke-width="1.4"/><path d="M4.6 0.8L7.4 3.5L4.6 6.2" fill="none" stroke="#1e7ec4" stroke-width="1.4"/></svg>
<span class="t" style="top:119.98px;font-size:9px;color:#555;left:529.65px;transform-origin:0 50%;transform:scaleX(1.0624);">,0</span>
<svg style="left:595px;top:71px" width="17" height="16" viewBox="0 0 17 16"><rect x="0.5" y="0.5" width="12" height="11.6" fill="#fff" stroke="#7a7a7a"/><rect x="1" y="1" width="6" height="3" fill="#f0583a"/><rect x="1" y="4.6" width="8" height="2.6" fill="#2b7cd3"/><rect x="1" y="8" width="5" height="3.6" fill="#f0583a"/><path d="M7 0.5V4.5M10 0.5V4.5" stroke="#7a7a7a" stroke-width="0.8"/><rect x="6.5" y="7" width="9.6" height="8.4" fill="#fff" stroke="#6a6a6a"/><path d="M8.6 10H14M8.6 12.4H14M12.6 8.6L10 13.8" stroke="#444" stroke-width="0.9"/></svg>
<svg style="left:595px;top:94px" width="17" height="16" viewBox="0 0 17 16"><rect x="0.5" y="0.5" width="14" height="11.5" fill="#fff" stroke="#7a7a7a"/><rect x="4.5" y="4.5" width="7" height="7" fill="#a9d5d8"/><path d="M0.5 4H14.5M0.5 8H14.5M4.5 0.5V12M8.5 0.5V12M11.8 0.5V12" stroke="#7a7a7a" stroke-width="0.8"/><path d="M8.6 11.2L15.6 2.6L16.6 4.4L10.4 12.4Z" fill="#6e6e6e" stroke="#f3f3f3" stroke-width="0.6"/><path d="M4 15.6C6 15.4 7 14 7.4 12.6C7.8 11.2 9.4 10.8 10.4 11.6C11.4 12.6 11 14.4 9.4 15.2C8 15.8 6 15.8 4 15.6Z" fill="#1e7ec4"/></svg>
<svg style="left:595px;top:117px" width="17" height="16" viewBox="0 0 17 16"><rect x="0.5" y="0.5" width="14" height="11.5" fill="#fff" stroke="#7a7a7a"/><rect x="4.5" y="4.5" width="7" height="7" fill="#a9d5d8"/><path d="M0.5 4H14.5M0.5 8H14.5M4.5 0.5V12M8.5 0.5V12M11.8 0.5V12" stroke="#7a7a7a" stroke-width="0.8"/><path d="M8.6 11.2L15.6 2.6L16.6 4.4L10.4 12.4Z" fill="#6e6e6e" stroke="#f3f3f3" stroke-width="0.6"/><path d="M4 15.6C6 15.4 7 14 7.4 12.6C7.8 11.2 9.4 10.8 10.4 11.6C11.4 12.6 11 14.4 9.4 15.2C8 15.8 6 15.8 4 15.6Z" fill="#1e7ec4"/></svg>
<svg style="left:770px;top:78px" width="5" height="3" viewBox="0 0 5 3"><path d="M0 0H5L2.5 3Z" fill="#666"/></svg>
<svg style="left:774px;top:101px" width="5" height="3" viewBox="0 0 5 3"><path d="M0 0H5L2.5 3Z" fill="#666"/></svg>
<svg style="left:686px;top:124px" width="5" height="3" viewBox="0 0 5 3"><path d="M0 0H5L2.5 3Z" fill="#666"/></svg>
<svg style="left:804px;top:71px" width="17" height="16" viewBox="0 0 17 16"><path d="M0.5 0.5H8.5V4.5H0.5ZM4.5 0.5V4.5" fill="#fff" stroke="#707070"/><path d="M0.5 10.5H8.5V15H0.5ZM4.5 10.5V15M0.5 12.8H8.5" fill="#fff" stroke="#707070"/><rect x="7.5" y="5.5" width="8.6" height="3.6" fill="#a9d5d8" stroke="#707070"/><path d="M11.8 5.5V9" stroke="#707070"/><path d="M0.8 7.3H7" stroke="#1e7ec4" stroke-width="1.5"/><path d="M3.6 4.6L0.8 7.3L3.6 10" fill="none" stroke="#1e7ec4" stroke-width="1.5"/></svg>
<svg style="left:804px;top:94px" width="17" height="16" viewBox="0 0 17 16"><path d="M0.5 0.5H8.5V3.5H0.5ZM4.5 0.5V3.5" fill="#fff" stroke="#707070"/><path d="M0.5 10.5H8.5V15H0.5ZM4.5 10.5V15M0.5 12.8H8.5" fill="#fff" stroke="#707070"/><rect x="3.5" y="5.5" width="4.6" height="3.2" fill="#a9d5d8" stroke="#707070"/><path d="M9 3.4L16 10M16 3.4L9 10" stroke="#f0583a" stroke-width="1.4"/></svg>
<svg style="left:804px;top:117px" width="16" height="16" viewBox="0 0 16 16"><path d="M0.5 0V4M13.5 0V4" stroke="#1e7ec4"/><path d="M1.5 2H12.5" stroke="#1e7ec4"/><path d="M3.4 0.6L1.6 2L3.4 3.4M10.6 0.6L12.4 2L10.6 3.4" fill="none" stroke="#1e7ec4" stroke-width="0.9"/><rect x="0.5" y="5.5" width="13.5" height="9" fill="#fff" stroke="#707070"/><path d="M0.5 8.5H14M0.5 11.5H14M4 5.5V14.5M8 5.5V14.5M11 5.5V14.5" stroke="#9a9a9a" stroke-width="0.8"/><rect x="4" y="8" width="4.4" height="3.6" fill="#1e7ec4"/><path d="M0.5 15.5H6.5M8 15.5H14" stroke="#707070"/></svg>
<svg style="left:881px;top:78px" width="5" height="3" viewBox="0 0 5 3"><path d="M0 0H5L2.5 3Z" fill="#666"/></svg>
<svg style="left:877px;top:101px" width="5" height="3" viewBox="0 0 5 3"><path d="M0 0H5L2.5 3Z" fill="#666"/></svg>
<svg style="left:869px;top:124px" width="5" height="3" viewBox="0 0 5 3"><path d="M0 0H5L2.5 3Z" fill="#666"/></svg>
<svg style="left:915px;top:71px" width="16" height="15" viewBox="0 0 16 15"><path d="M0.4 0H14.6V2.4H5L10.2 7.5L5 12.6H15V15H0.4V13.2L6.2 7.5L0.4 1.8Z" fill="#666"/></svg>
<svg style="left:937px;top:78px" width="5" height="3" viewBox="0 0 5 3"><path d="M0 0H5L2.5 3Z" fill="#666"/></svg>
<span class="t" style="top:67.38px;font-size:9px;color:#1e7ec4;font-weight:bold;left:950.80px;transform-origin:0 50%;transform:scaleX(1.0164);">A</span>
<span class="t" style="top:76.75px;font-size:8.5px;color:#777;left:951.02px;transform-origin:0 50%;transform:scaleX(1.0980);">Я</span>
<svg style="left:959px;top:76px" width="8" height="7" viewBox="0 0 8 7"><path d="M0 0H7.4V1.2L4.6 3.6V6.6H2.8V3.6L0 1.2Z" fill="#666"/></svg>
<svg style="left:970px;top:78px" width="5" height="3" viewBox="0 0 5 3"><path d="M0 0H5L2.5 3Z" fill="#666"/></svg>
<svg style="left:916px;top:94px" width="14" height="16" viewBox="0 0 14 16"><rect x="0.5" y="0.5" width="13" height="15" fill="#fff" stroke="#707070"/><rect x="0" y="0" width="14" height="3.6" fill="#707070"/><path d="M7 5.6V12.6" stroke="#1e7ec4" stroke-width="1.8"/><path d="M3.6 9.4L7 12.8L10.4 9.4" fill="none" stroke="#1e7ec4" stroke-width="1.8"/></svg>
<svg style="left:935px;top:101px" width="5" height="3" viewBox="0 0 5 3"><path d="M0 0H5L2.5 3Z" fill="#666"/></svg>
<svg style="left:951px;top:95px" width="14" height="14" viewBox="0 0 14 14"><circle cx="8.8" cy="5.2" r="3.6" fill="#fff" stroke="#1e7ec4" stroke-width="1.5"/><path d="M6 8L0.8 12.8" stroke="#1e7ec4" stroke-width="2"/></svg>
<svg style="left:970px;top:101px" width="5" height="3" viewBox="0 0 5 3"><path d="M0 0H5L2.5 3Z" fill="#666"/></svg>
<svg style="left:916px;top:117px" width="14" height="14" viewBox="0 0 14 14"><path d="M3.4 7L8.6 1.6C9.6 0.6 11 0.8 11.8 1.8C12.8 2.8 12.8 4 12 5L6.8 10.6Z" fill="#f0a478"/><path d="M2.6 7.8L6 11.4L4.4 13L0.8 9.6Z" fill="#f0a478"/></svg>
<svg style="left:935px;top:124px" width="5" height="3" viewBox="0 0 5 3"><path d="M0 0H5L2.5 3Z" fill="#666"/></svg>
<svg style="left:1052px;top:146px" width="10" height="6" viewBox="0 0 10 6"><path d="M0.8 5.2L5 1L9.2 5.2" fill="none" stroke="#666" stroke-width="1.5"/></svg>
<svg style="left:93px;top:178px" width="7" height="4" viewBox="0 0 7 4"><path d="M0 0H7L3.5 4Z" fill="#777"/></svg>
<svg style="left:120px;top:176px" width="2" height="11" viewBox="0 0 2 11"><rect x="0" y="0" width="2" height="1.6" fill="#b4b4b4"/><rect x="0" y="3" width="2" height="1.6" fill="#b4b4b4"/><rect x="0" y="6" width="2" height="1.6" fill="#b4b4b4"/><rect x="0" y="9" width="2" height="1.6" fill="#b4b4b4"/></svg>
<svg style="left:150px;top:177px" width="10" height="10" viewBox="0 0 10 10"><path d="M0.6 0.6L9.4 9.4M9.4 0.6L0.6 9.4" stroke="#c4c4c4" stroke-width="1.5"/></svg>
<svg style="left:185px;top:176px" width="14" height="11" viewBox="0 0 14 11"><path d="M0.8 6L4.6 9.8L13 0.8" fill="none" stroke="#c4c4c4" stroke-width="1.8"/></svg>
<span class="t" style="top:173.05px;font-size:14px;color:#555;font-weight:bold;font-style:italic;font-family:'Liberation Serif',serif;left:222.50px;transform-origin:0 50%;transform:scaleX(0.9312);">f</span>
<span class="t" style="top:175.21px;font-size:9.5px;color:#555;font-weight:bold;font-style:italic;font-family:'Liberation Serif',serif;left:227.66px;transform-origin:0 50%;transform:scaleX(1.0638);">x</span>
<svg style="left:1055px;top:178px" width="8" height="5" viewBox="0 0 8 5"><path d="M0.6 0.6L4 4L7.4 0.6" fill="none" stroke="#777" stroke-width="1.6"/></svg>
<svg style="left:91px;top:146px" width="7" height="7" viewBox="0 0 7 7"><path d="M0.5 5.4V0.5H5.4" fill="none" stroke="#777" stroke-width="1"/><path d="M6.8 3.2V6.8H3.2Z" fill="#777"/><path d="M2.8 2.8L5.6 5.6" stroke="#777" stroke-width="1"/></svg>
<svg style="left:305px;top:146px" width="7" height="7" viewBox="0 0 7 7"><path d="M0.5 5.4V0.5H5.4" fill="none" stroke="#777" stroke-width="1"/><path d="M6.8 3.2V6.8H3.2Z" fill="#777"/><path d="M2.8 2.8L5.6 5.6" stroke="#777" stroke-width="1"/></svg>
<svg style="left:478px;top:146px" width="7" height="7" viewBox="0 0 7 7"><path d="M0.5 5.4V0.5H5.4" fill="none" stroke="#777" stroke-width="1"/><path d="M6.8 3.2V6.8H3.2Z" fill="#777"/><path d="M2.8 2.8L5.6 5.6" stroke="#777" stroke-width="1"/></svg>
<svg style="left:572px;top:146px" width="7" height="7" viewBox="0 0 7 7"><path d="M0.5 5.4V0.5H5.4" fill="none" stroke="#777" stroke-width="1"/><path d="M6.8 3.2V6.8H3.2Z" fill="#777"/><path d="M2.8 2.8L5.6 5.6" stroke="#777" stroke-width="1"/></svg>
</body></html>
